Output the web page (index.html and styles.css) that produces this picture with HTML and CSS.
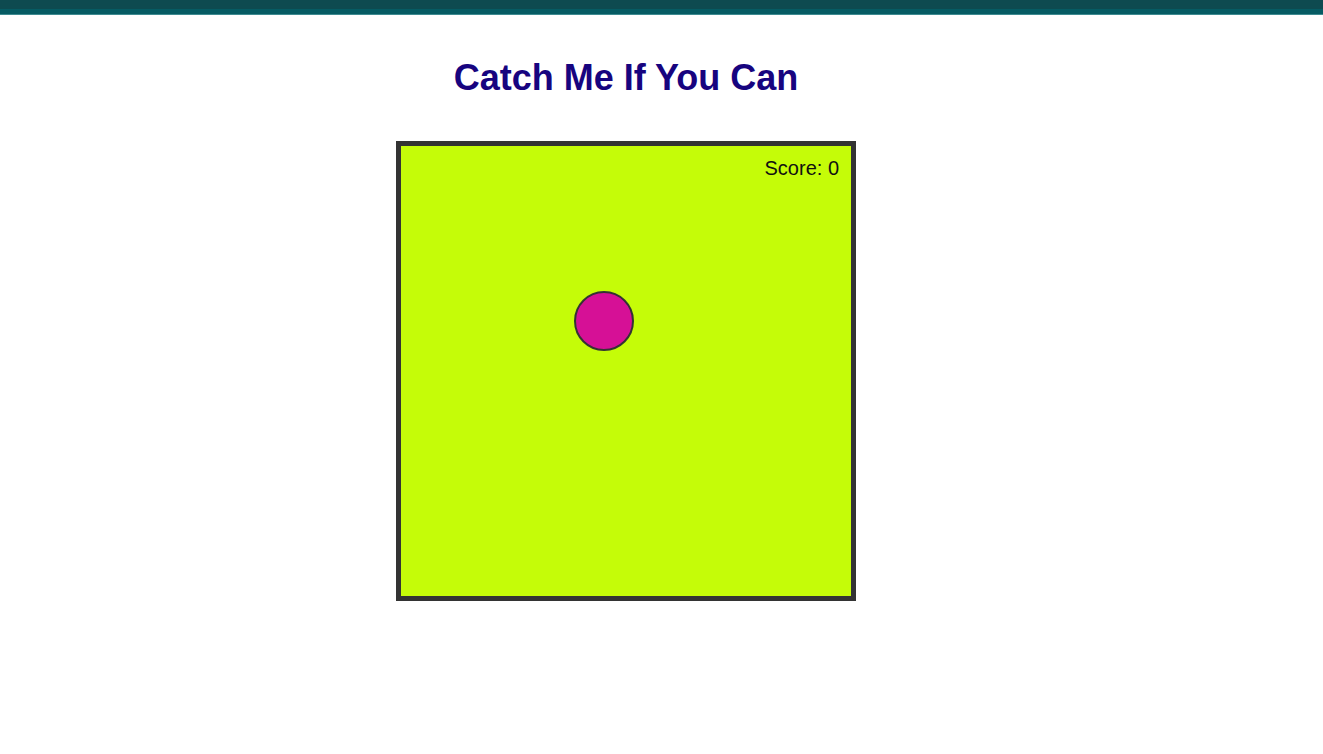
FILE: index.html
```html
<!DOCTYPE html>
<html>
<head>
<meta charset="utf-8">
<title>Catch Me If You Can</title>
<link rel="stylesheet" href="styles.css">
</head>
<body>
<div class="topbar"></div>
<main class="page">
  <h1 class="title">Catch Me If You Can</h1>
  <div class="arena">
    <div class="score">Score: 0</div>
    <div class="ball"></div>
  </div>
</main>
</body>
</html>
```
FILE: styles.css
```css
html, body {
  margin: 0;
  padding: 0;
  background: #ffffff;
  font-family: "Liberation Sans", Arial, sans-serif;
}
.topbar {
  height: 9px;
  background: #0e4a50;
  border-bottom: 5px solid #065b63;
  box-shadow: 0 1px 0 #3d8a90;
}
.page {
  width: 1252px;
  display: flex;
  flex-direction: column;
  align-items: center;
  padding-top: 43px;
}
.title {
  margin: 0 0 43px 0;
  font-size: 36px;
  font-weight: bold;
  line-height: 41px;
  color: #17047f;
}
.arena {
  position: relative;
  width: 450px;
  height: 450px;
  border: 5px solid #333333;
  background: #c5fc08;
}
.score {
  position: absolute;
  top: 11px;
  right: 12px;
  font-size: 20px;
  line-height: 23px;
  color: #111111;
}
.ball {
  position: absolute;
  left: 173px;
  top: 145px;
  width: 56px;
  height: 56px;
  border: 2px solid #333333;
  border-radius: 50%;
  background: #d61096;
}
```
